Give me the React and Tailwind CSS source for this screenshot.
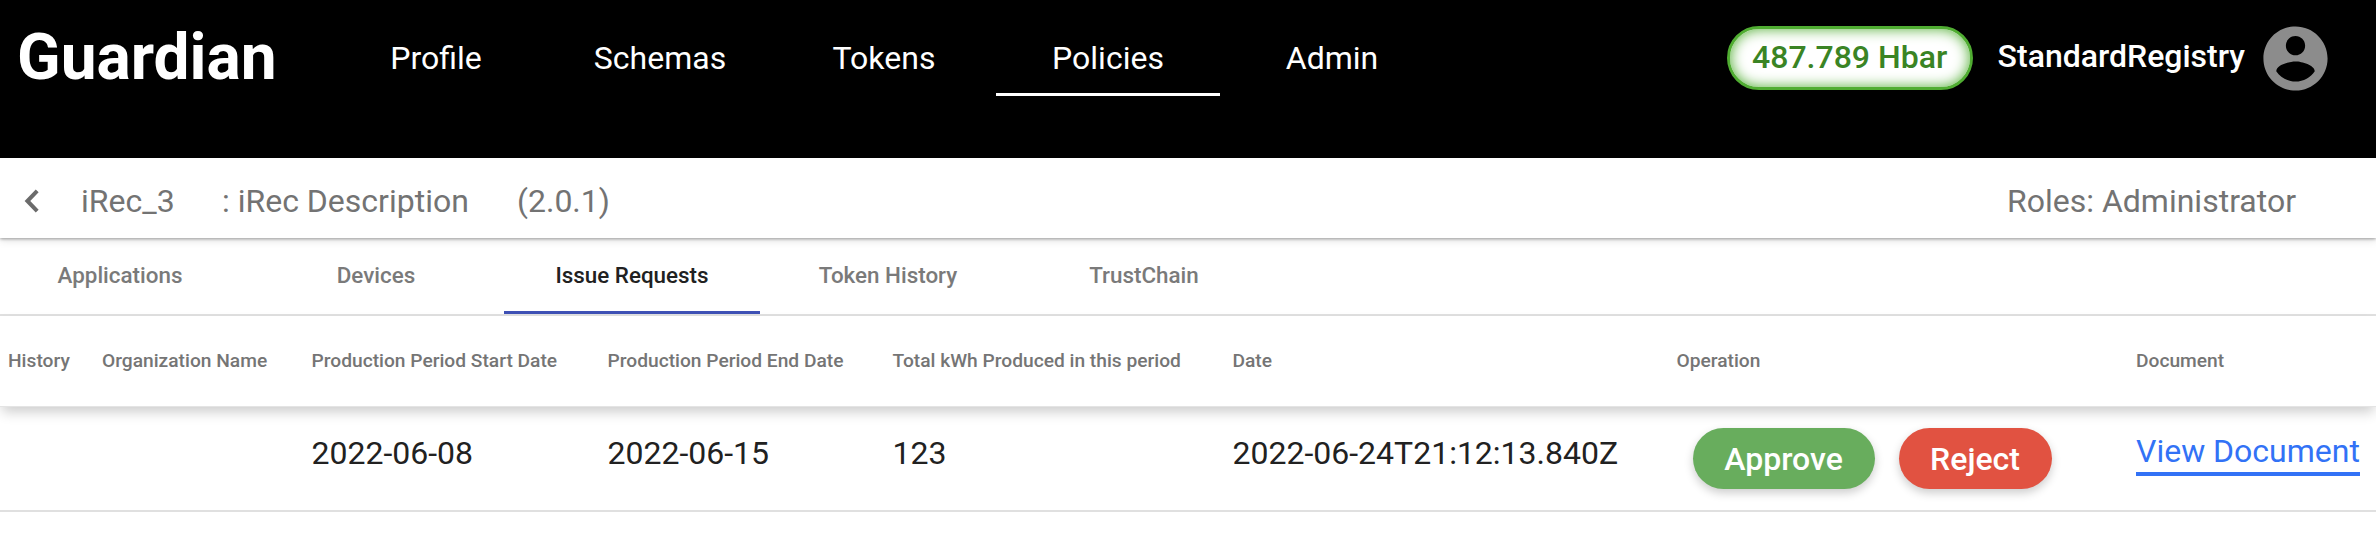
import React from "react";

const NAV = [
  { label: "Profile" },
  { label: "Schemas" },
  { label: "Tokens" },
  { label: "Policies", active: true },
  { label: "Admin" },
];

const TABS = ["Applications", "Devices", "Issue Requests", "Token History", "TrustChain"];

const COLUMNS = [
  { key: "history", label: "History", width: "w-[94px]" },
  { key: "org", label: "Organization Name", width: "w-[209.5px]" },
  { key: "start", label: "Production Period Start Date", width: "w-[296px]" },
  { key: "end", label: "Production Period End Date", width: "w-[285px]" },
  { key: "total", label: "Total kWh Produced in this period", width: "w-[340px]" },
  { key: "date", label: "Date", width: "w-[444px]" },
  { key: "operation", label: "Operation", width: "w-[459.5px]" },
  { key: "document", label: "Document", width: "w-[230px]" },
];

const ROW = {
  start: "2022-06-08",
  end: "2022-06-15",
  total: "123",
  date: "2022-06-24T21:12:13.840Z",
};

function Header() {
  return (
    <header className="flex h-[158px] items-start bg-black text-white">
      <div className="w-[324px] pl-[17px] pt-[20px] text-[64px] leading-[76px] font-bold">Guardian</div>
      <nav className="flex">
        {NAV.map((n) => (
          <a
            key={n.label}
            className={`flex h-24 w-56 items-center justify-center border-b-[3px] pt-[22px] text-[32px] leading-[38px] ${
              n.active ? "border-white" : "border-transparent"
            }`}
          >
            {n.label}
          </a>
        ))}
      </nav>
      <div className="mt-[19px] ml-auto flex h-[78px] items-center pr-[42px]">
        <div className="flex h-16 w-[246px] items-center justify-center rounded-full border-[3px] border-[#50ad32] bg-white pb-[2px] text-[32px] font-medium text-[#3a8424] shadow-[inset_0_0_14px_#50ad32]">
          487.789 Hbar
        </div>
        <div className="ml-[25px] pb-1 text-[32px] font-medium">StandardRegistry</div>
        <svg viewBox="0 0 24 24" className="ml-3 h-[77px] w-[77px]" fill="#8c8c8c">
          <path d="M12 2C6.48 2 2 6.48 2 12s4.48 10 10 10 10-4.48 10-10S17.52 2 12 2zm0 3c1.66 0 3 1.34 3 3s-1.34 3-3 3-3-1.34-3-3 1.34-3 3-3zm0 14.2c-2.5 0-4.71-1.28-6-3.22.03-1.99 4-3.08 6-3.08 1.99 0 5.97 1.09 6 3.08-1.29 1.94-3.5 3.22-6 3.22z" />
        </svg>
      </div>
    </header>
  );
}

function PolicyBar() {
  return (
    <div className="relative z-10 flex h-20 items-center bg-white pt-[6px] pr-20 text-[32px] text-[#737373] shadow-[0_1px_3px_rgba(0,0,0,0.35),0_3px_8px_rgba(0,0,0,0.1)]">
      <svg viewBox="0 0 16 24" className="ml-[23px] h-6 w-4" fill="none" stroke="#6b6b6b" strokeWidth="4">
        <path d="M14.2 1.8 4.4 12l9.8 10.2" />
      </svg>
      <span className="ml-[42px] w-[141px]">iRec_3</span>
      <span className="w-[295px]">: iRec Description</span>
      <span>(2.0.1)</span>
      <span className="ml-auto">Roles: Administrator</span>
    </div>
  );
}

function Tabs() {
  return (
    <div className="flex h-[78px] border-b-2 border-[#e0e0e0] text-[22.4px] font-medium">
      {TABS.map((t, i) => (
        <div
          key={t}
          className={`flex w-64 shrink-0 items-center justify-center border-b-[3px] pt-[3px] ${i === 0 ? "-ml-2" : ""} ${
            t === "Issue Requests" ? "border-[#3f51b5] text-[#212121]" : "border-transparent text-[#7a7a7a]"
          }`}
        >
          {t}
        </div>
      ))}
    </div>
  );
}

function Cell({ column }) {
  if (column.key === "operation") {
    return (
      <div className="flex gap-6 pt-[21px] pl-4 text-[32px] font-medium text-white">
        <button className="h-[61px] w-[182px] rounded-full bg-[#68ad5d] shadow-[0_4px_10px_rgba(0,0,0,0.2)]">Approve</button>
        <button className="h-[61px] w-[153px] rounded-full bg-[#e15241] shadow-[0_4px_10px_rgba(0,0,0,0.2)]">Reject</button>
      </div>
    );
  }
  if (column.key === "document") {
    return (
      <div className="pt-[25px]">
        <a className="inline-block h-[44px] border-b-4 border-[#3272f6] text-[32px] leading-[39px] whitespace-nowrap text-[#3272f6]">
          View Document
        </a>
      </div>
    );
  }
  return <div className="pt-[26px] text-[32px] leading-[40px] whitespace-nowrap text-[#212121]">{ROW[column.key]}</div>;
}

function Table() {
  return (
    <div>
      <div className="relative flex h-[91px] items-center border-b border-[#e4e4e4] bg-white pl-2 text-[19.2px] font-medium text-[#757575] shadow-[0_7px_12px_-2px_rgba(0,0,0,0.2)]">
        {COLUMNS.map((c) => (
          <div key={c.key} className={`${c.width} shrink-0 whitespace-nowrap`}>
            {c.label}
          </div>
        ))}
      </div>
      <div className="flex h-[105px] border-b-2 border-[#e0e0e0] pl-2">
        {COLUMNS.map((c) => (
          <div key={c.key} className={`${c.width} shrink-0`}>
            <Cell column={c} />
          </div>
        ))}
      </div>
    </div>
  );
}

export default function App() {
  return (
    <div className="h-[534px] w-[2376px] overflow-hidden bg-white font-['Roboto',sans-serif]">
      <Header />
      <PolicyBar />
      <Tabs />
      <Table />
    </div>
  );
}
